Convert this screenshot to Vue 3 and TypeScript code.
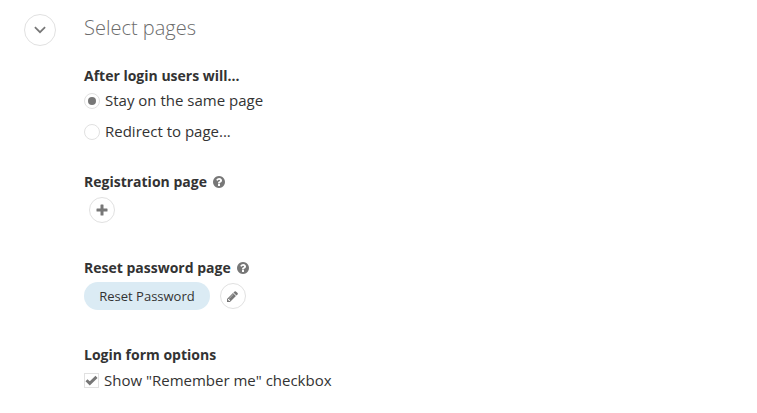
<script setup lang="ts">
import { ref } from 'vue'

const afterLogin = ref<'same' | 'redirect'>('same')
const rememberMe = ref<boolean>(true)
</script>

<template>
  <main class="section">
    <button class="round collapse" aria-label="Collapse">
      <svg width="12" height="8" viewBox="0 0 12 8"><path d="M.9 1.200 6 6.200 11.100 1.200" fill="none" stroke="#777" stroke-width="1.700" /></svg>
    </button>
    <div class="content">
      <h1>Select pages</h1>

      <section class="login">
        <h2>After login users will...</h2>
        <div class="option" @click="afterLogin = 'same'">
          <span class="radio"><i v-if="afterLogin === 'same'" /></span><span class="label">Stay on the same page</span>
        </div>
        <div class="option" @click="afterLogin = 'redirect'">
          <span class="radio"><i v-if="afterLogin === 'redirect'" /></span><span class="label">Redirect to page...</span>
        </div>
      </section>

      <section class="registration">
        <h2>Registration page
          <svg class="help" viewBox="0 128 1536 1536"><path d="M896 1376v-192q0-14-9-23t-23-9h-192q-14 0-23 9t-9 23v192q0 14 9 23t23 9h192q14 0 23-9t9-23zm256-672q0-88-55.500-163t-138.500-116-170-41q-243 0-371 213-15 24 8 42l132 100q7 6 19 6 16 0 25-12 53-68 86-92 34-24 86-24 48 0 85.500 26t37.500 59q0 38-20 61t-68 45q-63 28-115.500 86.500t-52.500 125.500v36q0 14 9 23t23 9h192q14 0 23-9t9-23q0-19 21.500-49.500t54.500-49.500q32-18 49-28.500t46-35 44.500-48 28-60.500 12.500-81zm384 192q0 209-103 385.500t-279.500 279.500-385.500 103-385.500-103-279.500-279.500-103-385.500 103-385.500 279.500-279.500 385.500-103 385.500 103 279.500 279.500 103 385.500z" /></svg>
        </h2>
        <button class="round small add" aria-label="Add">
          <svg width="12" height="12" viewBox="0 0 12 12"><path d="M5 .5h2q.5 0 .5.500v3.500h3.500q.5 0 .5.500v2q0 .5-.5.500h-3.500v3.500q0 .5-.5.500h-2q-.5 0-.5-.5v-3.500h-3.500q-.5 0-.5-.5v-2q0-.5.500-.5h3.500v-3.500q0-.5.500-.5z" /></svg>
        </button>
      </section>

      <section class="reset">
        <h2>Reset password page
          <svg class="help" viewBox="0 128 1536 1536"><path d="M896 1376v-192q0-14-9-23t-23-9h-192q-14 0-23 9t-9 23v192q0 14 9 23t23 9h192q14 0 23-9t9-23zm256-672q0-88-55.500-163t-138.500-116-170-41q-243 0-371 213-15 24 8 42l132 100q7 6 19 6 16 0 25-12 53-68 86-92 34-24 86-24 48 0 85.500 26t37.500 59q0 38-20 61t-68 45q-63 28-115.500 86.500t-52.500 125.500v36q0 14 9 23t23 9h192q14 0 23-9t9-23q0-19 21.500-49.500t54.500-49.500q32-18 49-28.500t46-35 44.500-48 28-60.500 12.500-81zm384 192q0 209-103 385.500t-279.500 279.500-385.500 103-385.500-103-279.500-279.500-103-385.500 103-385.500 279.500-279.500 385.500-103 385.500 103 279.500 279.500 103 385.500z" /></svg>
        </h2>
        <div class="selected">
          <span class="pill">Reset Password</span>
          <button class="round small edit" aria-label="Edit">
            <svg width="11" height="11" viewBox="0 128 1536 1536"><path d="M363 1536l91-91-235-235-91 91v107h128v128zm523-928q0-22-22-22-10 0-17 7l-542 542q-7 7-7 17 0 22 22 22 10 0 17-7l542-542q7-7 7-17zm-54-192l416 416-832 832h-416v-416zm683 96q0 53-37 90l-166 166-416-416 166-165q36-38 90-38 53 0 91 38l235 234q37 39 37 91z" /></svg>
          </button>
        </div>
      </section>

      <section class="options">
        <h2>Login form options</h2>
        <div class="option" @click="rememberMe = !rememberMe">
          <span class="checkbox"><svg v-if="rememberMe" width="13" height="11" viewBox="0 0 13 11"><path d="M1.500 5.200 4.800 8.400 11.500 1.900" fill="none" stroke="#777" stroke-width="2.900" /></svg></span><span class="label">Show "Remember me" checkbox</span>
        </div>
      </section>
    </div>
  </main>
</template>

<style>
body { background: #fff; }
</style>

<style scoped>
* { box-sizing: border-box; }
.section { display: flex; gap: 28px; height: 413px; padding: 14px 24px 0; font-family: "Open Sans", sans-serif; color: #333; }
.content { display: flex; flex-direction: column; }
h1 { margin: 0; height: 28px; line-height: 28px; font-size: 20px; font-weight: 300; color: #6c6c6c; }
h2 { margin: 0; height: 20px; line-height: 20px; font-size: 14px; font-weight: 700; display: flex; align-items: center; gap: 6px; }
.round { width: 32px; height: 32px; flex: none; padding: 0; border: 1px solid #e1e1e1; border-radius: 50%; background: #fff; display: flex; align-items: center; justify-content: center; }
.small { width: 26px; height: 26px; }
.edit { padding-right: 1px; }
svg { display: block; fill: #777; }
.help { width: 12px; height: 12px; }
.login { padding-top: 24px; }
.login h2 { height: 19px; line-height: 20px; }
.option { display: flex; align-items: center; height: 31px; font-size: 15px; }
.label { line-height: 20px; padding-bottom: 2px; }
.radio { width: 16px; height: 16px; margin-right: 5px; border: 1px solid #e1e1e1; border-radius: 50%; display: flex; align-items: center; justify-content: center; }
.radio i { width: 8px; height: 8px; border-radius: 50%; background: #777; }
.registration { padding-top: 25px; }
.add { margin: 5px 0 0 5px; }
.reset { padding-top: 35px; }
.selected { display: flex; align-items: center; gap: 10px; margin-top: 4px; }
.pill { width: 126px; height: 28px; line-height: 28px; border-radius: 14px; background: #dbebf4; text-align: center; font-size: 13px; }
.options { padding-top: 35px; }
.checkbox { width: 15px; height: 15px; margin-right: 5px; border: 1px solid #e1e1e1; display: flex; align-items: center; justify-content: center; }
</style>
